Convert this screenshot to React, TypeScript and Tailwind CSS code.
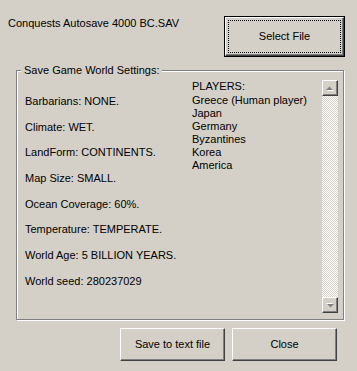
import React from "react";

const settings = [
  "Barbarians: NONE.",
  "Climate: WET.",
  "LandForm: CONTINENTS.",
  "Map Size: SMALL.",
  "Ocean Coverage: 60%.",
  "Temperature: TEMPERATE.",
  "World Age: 5 BILLION YEARS.",
  "World seed: 280237029",
];

const players = ["Greece (Human player)", "Japan", "Germany", "Byzantines", "Korea", "America"];

// classic raised 3D edge
const raised =
  "border border-t-white border-l-white border-r-[#404040] border-b-[#404040] shadow-[inset_-1px_-1px_0_#808080]";

const Arrow = ({ down }: { down?: boolean }) => (
  <div className={`w-[16px] h-[16px] bg-[#d4d0c8] flex items-center justify-center ${raised}`}>
    <svg width="8" height="5" viewBox="0 0 8 5" className={down ? "rotate-180" : ""}>
      <polygon points="1,5 8,5 4.5,1.5" fill="#ffffff" />
      <polygon points="0,4 7,4 3.5,0.5" fill="#808080" />
    </svg>
  </div>
);

const WinButton = ({ label, className = "" }: { label: string; className?: string }) => (
  <button className={`bg-[#d4d0c8] flex items-center justify-center leading-[13px] ${raised} ${className}`}>
    {label}
  </button>
);

const App = () => {
  return (
    <div className="w-[357px] h-[371px] bg-[#d4d0c8] text-black text-[11px] leading-[13px] font-['Liberation_Sans',Arial,sans-serif] overflow-hidden">
      {/* top row */}
      <div className="flex pt-[16px] pl-[8px] pr-[12px]">
        <div className="mt-[1px]">Conquests Autosave 4000 BC.SAV</div>
        <div className="ml-auto w-[121px] h-[41px] border border-black">
          <div className={`h-full bg-[#d4d0c8] p-[2px] ${raised}`}>
            <div className="h-full border border-dotted border-black flex items-center justify-center">
              Select File
            </div>
          </div>
        </div>
      </div>

      {/* group box */}
      <div className="relative mt-[13px] ml-[16px] w-[328px] h-[250px] border border-[#808080] shadow-[inset_1px_1px_0_#fff,1px_1px_0_#fff] flex">
        <span className="absolute left-[4px] top-[-7px] pl-[3px] pr-[2px] bg-[#d4d0c8]">Save Game World Settings:</span>

        <div className="w-[175px] pl-[8px] pt-[24px]">
          {settings.map((s) => (
            <div key={s} className="h-[25.7px]">
              {s}
            </div>
          ))}
        </div>

        <div className="flex-1 pt-[9px]">
          <div className="mb-[1px]">PLAYERS:</div>
          {players.map((p) => (
            <div key={p}>{p}</div>
          ))}
        </div>

        <div className="mt-[9px] mr-[5px] w-[16px] h-[233px] flex flex-col bg-[repeating-conic-gradient(#ffffff_0_25%,#d4d0c8_0_50%)] bg-[length:2px_2px]">
          <Arrow />
          <div className="flex-1" />
          <Arrow down />
        </div>
      </div>

      {/* bottom buttons */}
      <div className="flex justify-end gap-[7px] mt-[8px] pr-[20px]">
        <WinButton label="Save to text file" className="w-[105px] h-[33px]" />
        <WinButton label="Close" className="w-[105px] h-[33px]" />
      </div>
    </div>
  );
};

export default App;
